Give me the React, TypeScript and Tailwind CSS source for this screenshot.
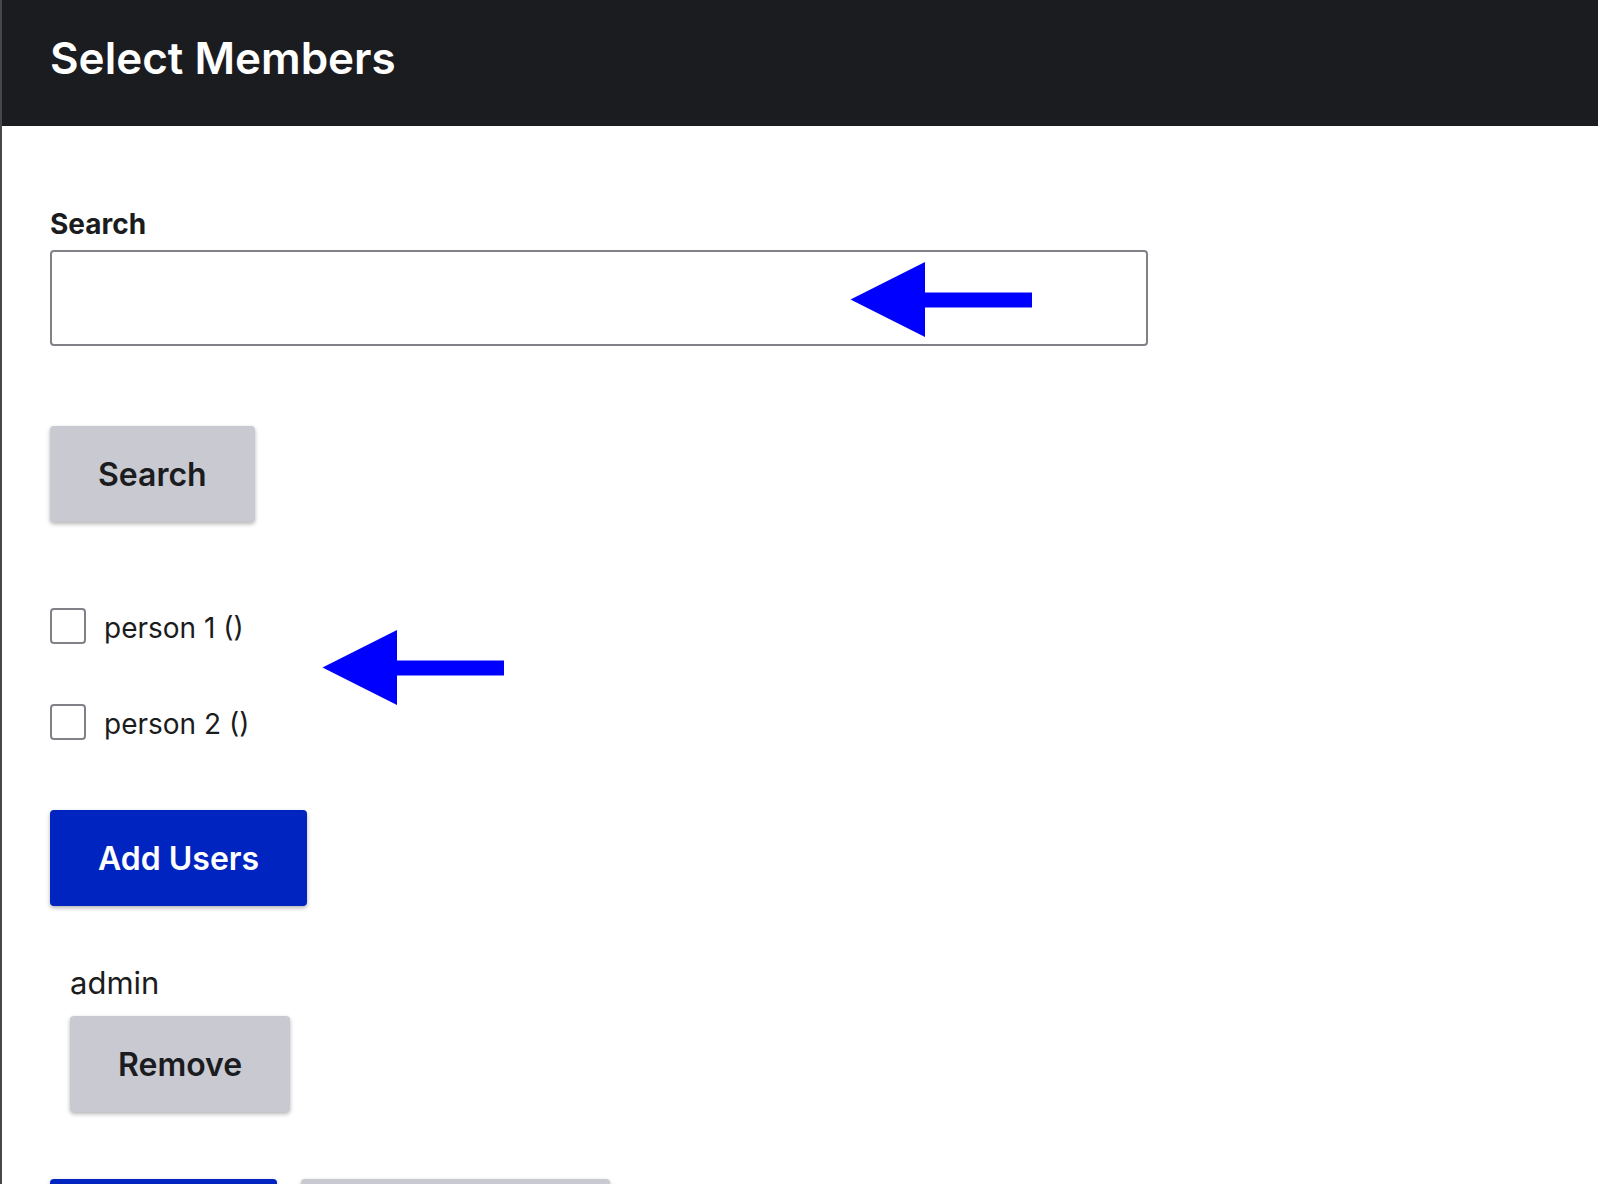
import type { ComponentProps } from "react";

function Arrow({ className }: { className: string }) {
  return (
    <svg
      className={`pointer-events-none absolute h-[75px] w-[182px] ${className}`}
      viewBox="0 0 182 75"
      fill="#0000ff"
      aria-hidden="true"
    >
      <path d="M0.5 37.5 75 0V30.5H182V45.5H75V75Z" />
    </svg>
  );
}

function Button({
  primary = false,
  className = "",
  ...props
}: ComponentProps<"button"> & { primary?: boolean }) {
  const colors = primary ? "bg-[#0024c0] text-white" : "bg-[#c9c9d2] text-[#1b1c20]";
  return (
    <button
      type="button"
      className={`h-24 shrink-0 rounded-[4px] px-12 pt-0.5 text-[32px] leading-8 font-semibold whitespace-nowrap shadow-[0_2px_4px_rgba(0,0,0,0.3)] ${colors} ${className}`}
      {...props}
    />
  );
}

function Person({ id, name }: { id: string; name: string }) {
  return (
    <div className="flex h-9 items-center gap-[18px]">
      <input
        id={id}
        type="checkbox"
        className="size-9 shrink-0 appearance-none rounded-[4px] border-2 border-[#828188] bg-white checked:bg-[#0024c0]"
      />
      <label htmlFor={id} className="pt-1 text-[28px] leading-8">
        {name}
      </label>
    </div>
  );
}

export default function App() {
  return (
    <div className="h-screen overflow-hidden border-l-2 border-[#47474a] bg-white font-['Inter',sans-serif] text-[#1b1c20]">
      <header className="bg-[#1b1c20] px-12 pt-[30px] pb-10">
        <h1 className="text-[44px] leading-[56px] font-semibold text-white">Select Members</h1>
      </header>
      <main className="px-12 pt-20">
        <label htmlFor="search" className="block text-[28px] leading-9 font-bold">
          Search
        </label>
        <div className="relative mt-2 max-w-[1098px]">
          <input
            id="search"
            type="text"
            className="block h-24 w-full rounded-[4px] border-2 border-[#828188] bg-white px-7 text-[32px]"
          />
          <Arrow className="top-3 right-[116px]" />
        </div>
        <Button className="mt-20 block">Search</Button>

        <div className="relative mt-[86px] flex flex-col gap-[60px]">
          <Person id="person-1" name="person 1 ()" />
          <Person id="person-2" name="person 2 ()" />
          <Arrow className="top-[22px] left-[272px]" />
        </div>
        <Button primary className="mt-[70px] block">
          Add Users
        </Button>

        <div className="mt-14 pl-5">
          <p className="text-[31px] leading-[42px]">admin</p>
          <Button className="mt-3 block">Remove</Button>
        </div>

        <div className="mt-[67px] flex gap-6">
          <Button primary aria-label="Confirm selection" className="w-[227px]" />
          <Button aria-label="Secondary action" className="w-[309px]" />
        </div>
      </main>
    </div>
  );
}
